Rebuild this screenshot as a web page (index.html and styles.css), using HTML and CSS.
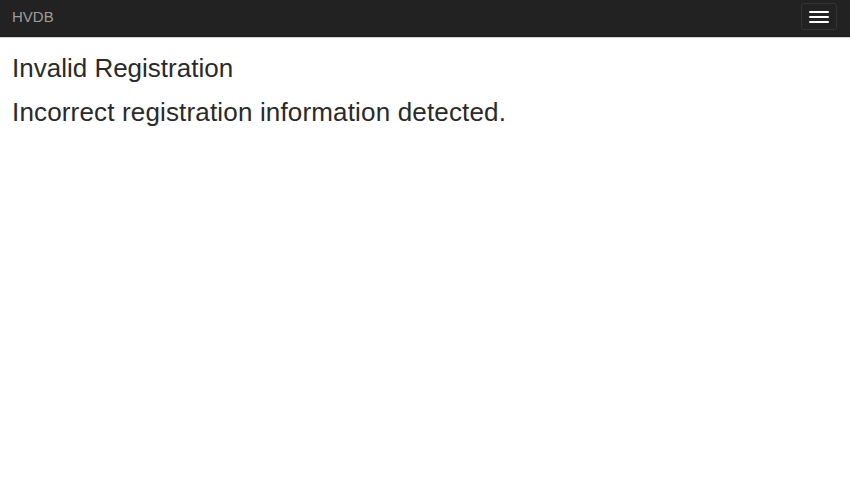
FILE: index.html
```html
<!DOCTYPE html>
<html>
<head>
<meta charset="utf-8">
<title>HVDB</title>
<link rel="stylesheet" href="styles.css">
</head>
<body>
<nav class="navbar">
  <a class="brand" href="#">HVDB</a>
  <button class="toggle" type="button" aria-label="Toggle navigation">
    <span class="bar"></span>
    <span class="bar"></span>
    <span class="bar"></span>
  </button>
</nav>
<main class="content">
  <h3 class="title">Invalid Registration</h3>
  <h3 class="message">Incorrect registration information detected.</h3>
</main>
</body>
</html>
```

FILE: styles.css
```css
html, body {
  margin: 0;
  padding: 0;
  background: #fff;
  font-family: "Liberation Sans", Arial, sans-serif;
  color: #333;
}

.navbar {
  height: 37px;
  background: #222;
  border-bottom: 1px solid #d0d0d0;
  display: flex;
  align-items: center;
  justify-content: space-between;
  padding: 0 13px 0 12px;
}

.brand {
  color: #9d9d9d;
  text-decoration: none;
  font-size: 15px;
  line-height: 15px;
  margin-bottom: 5px;
}

.toggle {
  width: 36px;
  height: 27px;
  margin-top: -4px;
  background: transparent;
  border: 1px solid #333;
  border-radius: 3px;
  padding: 0;
  display: flex;
  flex-direction: column;
  align-items: center;
  justify-content: center;
  gap: 3px;
}

.bar {
  display: block;
  width: 20px;
  height: 2px;
  background: #fff;
  border-radius: 1px;
}

.content {
  padding: 0 12px;
}

.title,
.message {
  font-size: 26px;
  font-weight: 500;
  margin: 0;
  line-height: 1.1;
  color: #2a2a2a;
}

.title {
  margin-top: 16px;
}

.message {
  margin-top: 15px;
  letter-spacing: 0.16px;
}
```
